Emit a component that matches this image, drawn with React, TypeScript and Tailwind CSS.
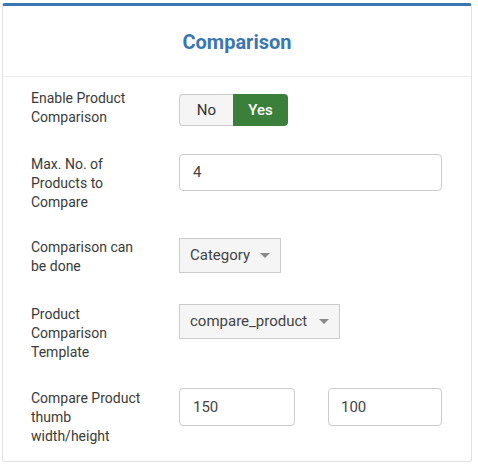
import React from "react";

const Caret = () => (
  <span className="inline-block h-0 w-0 border-x-[5px] border-t-[5px] border-x-transparent border-t-[#8a8a8a]"></span>
);

const App = () => {
  return (
    <div className="min-h-screen bg-white pl-[2px] pt-[3px] font-['Roboto',sans-serif]">
      {/* card */}
      <div className="w-[470px] rounded-[3px] border border-t-[3px] border-[#e3e3e3] border-t-[#3a76b0] bg-white">
        <div className="flex h-[71px] items-center justify-center border-b border-[#eeeeee] pt-[2px]">
          <h2 className="text-[20px] font-bold text-[#3a76b0]">Comparison</h2>
        </div>
        <div className="flex flex-col gap-[27px] pb-[16px] pl-[28px] pt-[11px] text-[14px] leading-[19px] text-[#3a3a3a]">
          {/* enable */}
          <div className="flex h-[39px]">
            <div className="w-[148px] pt-[1px]">
              Enable Product
              <br />
              Comparison
            </div>
            <div className="mt-[6px] flex h-[32px] text-[15px]">
              <div className="flex w-[54px] items-center justify-center rounded-l-[4px] border border-r-0 border-[#cccccc] bg-[#f5f5f5] text-[#333]">
                No
              </div>
              <div className="flex w-[55px] items-center justify-center rounded-r-[4px] bg-[#3a7f3a] font-medium text-white">
                Yes
              </div>
            </div>
          </div>
          {/* max */}
          <div className="flex h-[57px]">
            <div className="w-[148px] pt-[1px]">
              Max. No. of
              <br />
              Products to
              <br />
              Compare
            </div>
            <div className="flex h-[37px] w-[263px] items-center rounded-[4px] border border-[#cccccc] pl-[13px] text-[15px] text-[#444]">
              4
            </div>
          </div>
          {/* comparison can be done */}
          <div className="flex h-[39px]">
            <div className="w-[148px]">
              Comparison can
              <br />
              be done
            </div>
            <div className="flex h-[35px] items-center gap-[10px] border border-[#cccccc] bg-[#f5f5f5] px-[10px] text-[15px] text-[#444]">
              Category
              <Caret />
            </div>
          </div>
          {/* template */}
          <div className="flex h-[57px]">
            <div className="w-[148px] pt-[1px]">
              Product
              <br />
              Comparison
              <br />
              Template
            </div>
            <div className="flex h-[35px] items-center gap-[12px] self-start border border-[#cccccc] bg-[#f5f5f5] px-[10px] text-[15px] text-[#444]">
              compare_product
              <Caret />
            </div>
          </div>
          {/* thumb */}
          <div className="flex h-[57px]">
            <div className="w-[148px] pt-[1px]">
              Compare Product
              <br />
              thumb
              <br />
              width/height
            </div>
            <div className="flex gap-[33px]">
              <div className="flex h-[38px] w-[116px] items-center rounded-[4px] border border-[#cccccc] pl-[13px] text-[15px] text-[#444]">
                150
              </div>
              <div className="flex h-[38px] w-[114px] items-center rounded-[4px] border border-[#cccccc] pl-[12px] text-[15px] text-[#444]">
                100
              </div>
            </div>
          </div>
        </div>
      </div>
    </div>
  );
};

export default App;
